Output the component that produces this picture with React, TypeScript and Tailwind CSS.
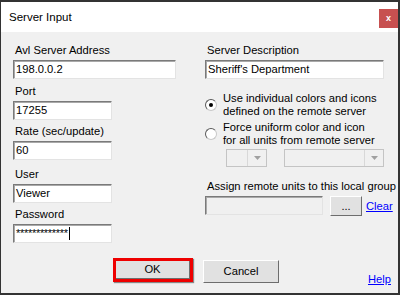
import React from "react";

const font = { fontFamily: '"Liberation Sans", Arial, sans-serif' };

function Label({ children }: { children: React.ReactNode }) {
  return <div className="h-[14px] pl-[2px] leading-[14px] text-[11.2px] text-black whitespace-nowrap">{children}</div>;
}

function Box({ w, children, disabled }: { w: string; children?: React.ReactNode; disabled?: boolean }) {
  return (
    <div
      className={`${w} h-[19px] mt-[3px] flex items-center pl-[2px] text-[11.2px] text-black border-t border-l border-[#7a7a7a] border-b border-r border-b-[#e3e3e3] border-r-[#e3e3e3] shadow-[inset_1px_1px_0_#a9a9a9] ${disabled ? "bg-[#f0f0f0]" : "bg-white"}`}
    >
      {children}
    </div>
  );
}

function Radio({ checked }: { checked?: boolean }) {
  return (
    <div className="w-[12px] h-[12px] rounded-full bg-white border border-[#5a5a5a] border-b-[#c8c8c8] border-r-[#c8c8c8] flex items-center justify-center shrink-0">
      {checked && <div className="w-[4px] h-[4px] rounded-full bg-black" />}
    </div>
  );
}

function Combo({ w }: { w: string }) {
  return (
    <div className={`${w} h-[18px] flex border border-[#c4c4c4] bg-[#f0f0f0]`}>
      <div className="flex-1" />
      <div className="w-[19px] border-l border-[#d8d8d8] flex items-center justify-center">
        <svg width="7" height="4" viewBox="0 0 7 4">
          <path d="M0 0 L7 0 L3.5 4 Z" fill="#a0a0a0" />
        </svg>
      </div>
    </div>
  );
}

export default function App() {
  return (
    <div
      className="w-[400px] h-[295px] flex flex-col border-t-2 border-l border-r-2 border-b-2 border-[#333333] bg-[#f0f0f0]"
      style={font}
    >
      <div className="h-[30px] bg-white flex items-start justify-between">
        <div className="pl-[8px] h-[30px] leading-[30px] text-[11.5px] text-black">Server Input</div>
        <div className="mt-[7px] w-[19px] h-[19px] bg-[#c75050] flex items-center justify-center text-white text-[9px] font-bold leading-none">
          x
        </div>
      </div>
      <div className="flex-1 flex flex-col">
        <div className="flex pt-[11px] pl-[12px]">
          <div className="w-[192px] shrink-0 flex flex-col">
            <Label>Avl Server Address</Label>
            <Box w="w-[163px]">198.0.0.2</Box>
            <div className="mt-[5px]"><Label>Port</Label></div>
            <Box w="w-[99px]">17255</Box>
            <div className="mt-[4px]"><Label>Rate (sec/update)</Label></div>
            <Box w="w-[99px]">60</Box>
            <div className="mt-[7px]"><Label>User</Label></div>
            <Box w="w-[99px]">Viewer</Box>
            <div className="mt-[4px]"><Label>Password</Label></div>
            <Box w="w-[99px]">
              <span className="text-[11px] leading-none tracking-[-0.3px]">*************</span>
              <span className="ml-[1px] w-[1px] h-[13px] bg-black" />
            </Box>
          </div>
          <div className="flex flex-col shrink-0">
            <Label>Server Description</Label>
            <Box w="w-[179px]">Sheriff's Department</Box>
            <div className="mt-[13px] flex items-center">
              <Radio checked />
              <div className="ml-[6px] text-[11.2px] leading-[13px] text-black">
                <div>Use individual colors and icons</div>
                <div>defined on the remote server</div>
              </div>
            </div>
            <div className="mt-[3px] flex items-center">
              <Radio />
              <div className="ml-[6px] text-[11.2px] leading-[13px] text-black">
                <div>Force uniform color and icon</div>
                <div>for all units from remote server</div>
              </div>
            </div>
            <div className="mt-[2px] pl-[21px] flex gap-[17px]">
              <Combo w="w-[41px]" />
              <Combo w="w-[100px]" />
            </div>
            <div className="mt-[12px]"><Label>Assign remote units to this local group</Label></div>
            <div className="flex items-start">
              <Box w="w-[118px]" disabled />
              <div className="ml-[7px] mt-[3px] w-[32px] h-[20px] bg-[#e1e1e1] border border-t-white border-l-white border-b-[#6d6d6d] border-r-[#6d6d6d] flex items-center justify-center text-[11px] text-black leading-none">
                ...
              </div>
              <div className="ml-[4px] mt-[6px] text-[11.2px] leading-[14px] text-[#0000ff] underline">Clear</div>
            </div>
          </div>
        </div>
        <div className="flex items-start mt-[15px] pl-[112px] pr-[7px]">
          <div className="w-[80px] h-[24px] border-[3px] border-[#ee0000] shadow-[1px_1px_1px_#888]">
            <div className="w-full h-full bg-[#e1e1e1] border-b border-r border-[#6d6d6d] flex items-center justify-center text-[11.2px] text-black">
              OK
            </div>
          </div>
          <div className="ml-[10px] mt-[2px] w-[76px] h-[23px] bg-[#e1e1e1] border border-t-white border-l-white border-b-[#6d6d6d] border-r-[#6d6d6d] flex items-center justify-center text-[11.2px] text-black">
            Cancel
          </div>
          <div className="ml-auto mt-[14px] text-[11.2px] leading-[14px] text-[#0000ff] underline">Help</div>
        </div>
      </div>
    </div>
  );
}
